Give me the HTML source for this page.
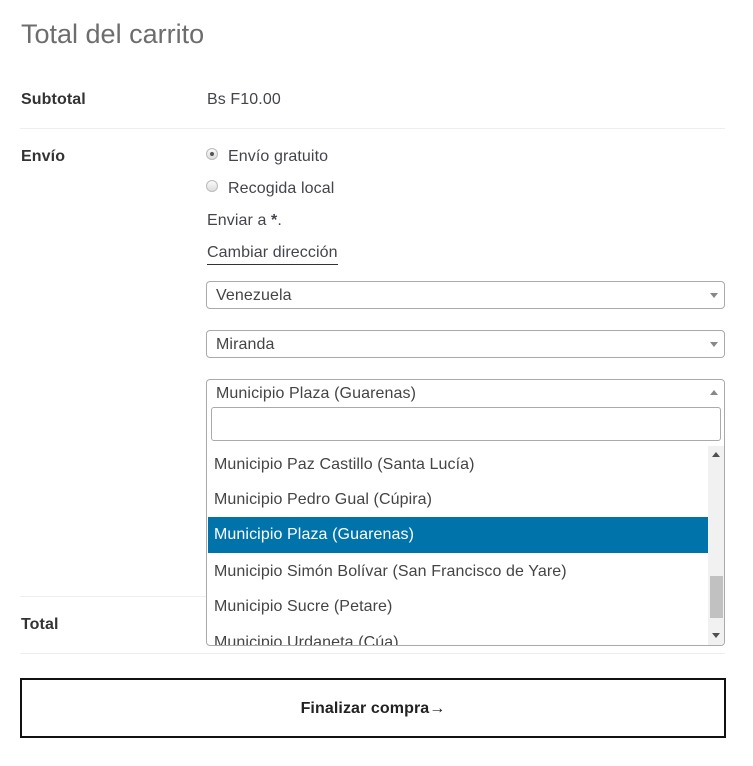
<!DOCTYPE html>
<html><head><meta charset="utf-8"><style>
*{margin:0;padding:0;box-sizing:border-box}
body{width:753px;height:766px;background:#fff;font-family:"Liberation Sans",sans-serif;color:#43454b;position:relative;overflow:hidden;font-size:16px;letter-spacing:0.1px}
.a{position:absolute;white-space:nowrap}
.b{font-weight:bold;color:#333}
.hr{position:absolute;left:20px;width:705px;height:1px;background:#eee}
.sel{position:absolute;left:206px;width:519px;height:28px;border:1px solid #aaa;border-radius:4px;background:#fff}
.sel span{position:absolute;left:9px;top:5px;color:#444}
.tri{position:absolute;right:6px;top:11px;width:0;height:0;border-left:4px solid transparent;border-right:4px solid transparent;border-top:5px solid #888}
.radio{position:absolute;width:12px;height:12px;border-radius:50%;border:1px solid #bbb;background:linear-gradient(#fafafa,#ddd)}
.it{position:absolute;left:1px;width:500px;height:36px;padding-left:6px;line-height:36px;color:#444}
</style></head><body>
<div class="a" style="left:21px;top:19px;font-size:27px;color:#6d6d6d;font-weight:300;letter-spacing:0">Total del carrito</div>
<div class="a b" style="left:21px;top:91px">Subtotal</div>
<div class="a" style="left:207px;top:91px">Bs F10.00</div>
<div class="hr" style="top:128px"></div>
<div class="a b" style="left:21px;top:148px">Envío</div>
<div class="radio" style="left:206px;top:148px"><div style="position:absolute;left:3px;top:3px;width:4px;height:4px;border-radius:50%;background:#555"></div></div>
<div class="a" style="left:228px;top:148px">Envío gratuito</div>
<div class="radio" style="left:206px;top:180px"></div>
<div class="a" style="left:228px;top:180px">Recogida local</div>
<div class="a" style="left:207px;top:212px">Enviar a <b>*</b>.</div>
<div class="a" style="left:207px;top:244px;border-bottom:1px solid #333;padding-bottom:2px">Cambiar dirección</div>
<div class="sel" style="top:281px"><span>Venezuela</span><div class="tri"></div></div>
<div class="sel" style="top:330px"><span>Miranda</span><div class="tri"></div></div>
<div class="hr" style="top:596px"></div>
<div class="a b" style="left:21px;top:616px">Total</div>
<div class="hr" style="top:653px"></div>
<div style="position:absolute;left:206px;top:379px;width:519px;height:267px;border:1px solid #aaa;border-radius:4px;background:#fff;overflow:hidden">
 <div class="a" style="left:9px;top:5px;color:#444">Municipio Plaza (Guarenas)</div>
 <div style="position:absolute;right:6px;top:10px;width:0;height:0;border-left:4px solid transparent;border-right:4px solid transparent;border-bottom:5px solid #888"></div>
 <div style="position:absolute;left:4px;top:27px;width:510px;height:34px;border:1px solid #aaa;border-radius:3px"></div>
 <div style="position:absolute;left:0;top:66px;width:519px;height:200px;overflow:hidden">
  <div class="it" style="top:1px">Municipio Paz Castillo (Santa Lucía)</div>
  <div class="it" style="top:36px">Municipio Pedro Gual (Cúpira)</div>
  <div class="it" style="top:71px;background:#0073aa;color:#fff">Municipio Plaza (Guarenas)</div>
  <div class="it" style="top:108px">Municipio Simón Bolívar (San Francisco de Yare)</div>
  <div class="it" style="top:143px">Municipio Sucre (Petare)</div>
  <div class="it" style="top:179px">Municipio Urdaneta (Cúa)</div>
  <div style="position:absolute;left:501px;top:0;width:17px;height:200px;background:#f1f1f1">
   <div style="position:absolute;left:4px;top:6px;border-left:4px solid transparent;border-right:4px solid transparent;border-bottom:5px solid #505050"></div>
   <div style="position:absolute;left:2px;top:130px;width:13px;height:42px;background:#c1c1c1"></div>
   <div style="position:absolute;left:4px;top:187px;border-left:4px solid transparent;border-right:4px solid transparent;border-top:5px solid #505050"></div>
  </div>
 </div>
</div>
<div style="position:absolute;left:20px;top:678px;width:706px;height:60px;border:2px solid #111;text-align:center;line-height:57px;font-weight:bold;color:#222">Finalizar compra→</div>
</body></html>
